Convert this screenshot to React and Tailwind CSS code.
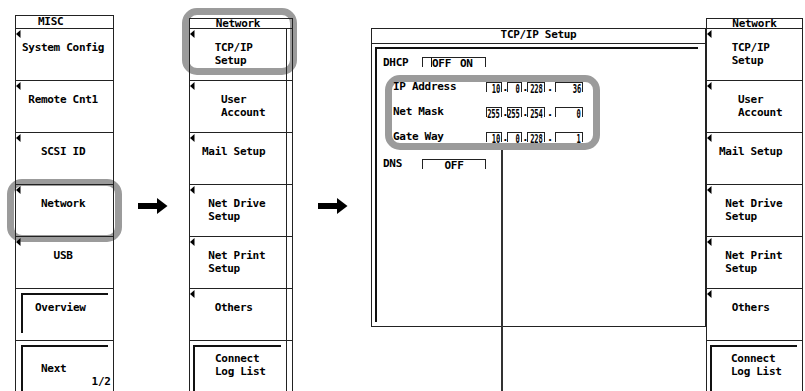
import React from 'react';

function Tri() {
  return (
    <svg width="5" height="8" viewBox="0 0 5 8" className="absolute left-0 top-[1px]">
      <path d="M0 4 L4.5 0 L4.5 8 Z" fill="#000" />
    </svg>
  );
}

function Arrow() {
  return (
    <svg width="30" height="16" viewBox="0 0 30 16">
      <path d="M0 5 H19 V0 L29.5 8 L19 16 V11 H0 Z" fill="#000" />
    </svg>
  );
}

// soft key of the right-hand menus (network menu)
function NetKey({ text, strip }) {
  return (
    <div className="flex h-[52px] border-b border-[#222]">
      <div className={strip ? 'relative w-[97px] border-r border-[#222]' : 'relative flex-1'}>
        <Tri />
        <div className="whitespace-pre pl-[12px] pt-[12px] leading-[13px]">{text}</div>
      </div>
    </div>
  );
}

function NetFrameKey({ strip, framePad }) {
  return (
    <div className="flex h-[52px] border-b border-[#222]">
      <div className={strip ? 'w-[97px] border-r border-[#222] pl-[3px] pr-[5px] pt-[4px]' : 'flex-1 pl-[3px] pr-[5px] pt-[4px]'}>
        <div className={'h-[47px] whitespace-pre border-l-2 border-t-2 border-[#111] pt-[5px] leading-[13px] ' + framePad}>
          {'Connect\nLog List'}
        </div>
      </div>
    </div>
  );
}

const netItems = ['  TCP/IP\n  Setup', '   User\n   Account', 'Mail Setup', ' Net Drive\n Setup', ' Net Print\n Setup', '  Others'];

function NetworkMenu({ strip }) {
  return (
    <div className={strip ? 'mt-[18px] w-[104px] shrink-0 border-x border-t border-[#222]' : 'mt-[18px] w-[97px] shrink-0 border-x border-t border-[#222]'}>
      <div className={strip ? 'h-[10px] border-b border-[#222] pr-[6px] text-center leading-[9px]' : 'h-[10px] border-b border-[#222] text-center leading-[9px]'}>
        Network
      </div>
      {netItems.map((t) => (
        <NetKey key={t} text={t} strip={strip} />
      ))}
      <NetFrameKey strip={strip} framePad={strip ? 'pl-[20px]' : 'pl-[19px]'} />
    </div>
  );
}

function MiscMenu() {
  const items = ['System Config', ' Remote Cnt1', '   SCSI ID', '   Network', '     USB'];
  return (
    <div className="ml-[15px] mt-[15px] w-[99px] shrink-0 border-x border-t border-[#222]">
      <div className="h-[13px] border-b border-[#222] pl-[22px] leading-[12px]">MISC</div>
      {items.map((t) => (
        <div key={t} className="relative h-[52px] border-b border-[#222]">
          <Tri />
          <div className="whitespace-pre pl-[6px] pt-[12px] leading-[13px]">{t}</div>
        </div>
      ))}
      <div className="h-[52px] border-b border-[#222] px-[5px] pt-[4px]">
        <div className="h-[40px] border-l-2 border-t-2 border-[#111] pl-[12px] pt-[6px] leading-[13px]">Overview</div>
      </div>
      <div className="h-[52px] px-[5px] pt-[4px]">
        <div className="h-[47px] whitespace-pre border-l-2 border-t-2 border-[#111] pl-[18px] pt-[15px] leading-[13px]">
          {'Next\n        1/2'}
        </div>
      </div>
    </div>
  );
}

function Octets({ values }) {
  const widths = ['w-[16px]', 'w-[15px]', 'w-[18px]', 'w-[28px]'];
  const dots = ['w-[5px]', 'w-[5px]', 'w-[10px]'];
  return (
    <div className="mt-[1px] flex">
      {values.map((v, i) => (
        <React.Fragment key={i}>
          <div className={'flex h-[10px] justify-end border-x border-t border-[#222] pr-[1px] ' + widths[i]}>
            <span className="inline-block origin-right scale-x-[0.55] text-[13px] leading-[11px]">{v}</span>
          </div>
          {i < 3 && <div className={'text-center leading-[11px] ' + dots[i]}>.</div>}
        </React.Fragment>
      ))}
    </div>
  );
}

function TcpIpPanel() {
  const rows = [
    ['IP Address', ['10', '0', '228', '36'], 'mt-[12px]'],
    ['Net Mask', ['255', '255', '254', '0'], 'mt-[13px]'],
    ['Gate Way', ['10', '0', '228', '1'], 'mt-[13px]'],
  ];
  return (
    <div className="mt-[28px] h-[299px] w-[335px] shrink-0 border border-[#222]">
      <div className="h-[15px] border-b border-[#222] text-center leading-[11px]">TCP/IP Setup</div>
      <div className="ml-[3px] mt-[3px] h-[275px] w-[323px] border-l-2 border-t-2 border-[#111]">
        {/* DHCP */}
        <div className="ml-[6px] mt-[8px] flex h-[12px]">
          <div className="w-[39px] leading-[12px]">DHCP</div>
          <div className="flex h-[10px] w-[64px] border-x border-t border-[#222] leading-[11px]">
            <span className="ml-[8px] border-l border-[#111]">OFF</span>
            <span className="ml-[9px]">ON</span>
          </div>
        </div>

        {rows.map(([label, vals, mt]) => (
          <div key={label} className={'ml-[16px] flex h-[12px] ' + mt}>
            <div className="w-[93px] leading-[12px]">{label}</div>
            <Octets values={vals} />
          </div>
        ))}

        {/* DNS */}
        <div className="ml-[6px] mt-[15px] flex h-[12px]">
          <div className="w-[39px] leading-[12px]">DNS</div>
          <div className="mt-[1px] h-[10px] w-[64px] border-x border-t border-[#222] text-center leading-[11px]">OFF</div>
        </div>
      </div>
    </div>
  );
}

export default function App() {
  return (
    <div className="relative isolate flex h-[391px] w-[805px] items-start overflow-hidden bg-white font-['DejaVu_Sans_Mono',monospace] text-[11px] font-bold tracking-[-0.3px] text-black">
      {/* grey highlight frames */}
      <div className="absolute left-[7px] top-[179px] -z-10 h-[63px] w-[115px] rounded-[15px] border-[7px] border-[#9b9b9b]" />
      <div className="absolute left-[182px] top-[8px] -z-10 h-[67px] w-[115px] rounded-[15px] border-[7px] border-[#9b9b9b]" />
      <div className="absolute left-[385px] top-[75px] -z-10 h-[75px] w-[215px] rounded-[15px] border-[7px] border-[#9b9b9b]" />

      <MiscMenu />
      <div className="w-[75px] shrink-0 pl-[24px] pt-[198px]">
        <Arrow />
      </div>
      <NetworkMenu strip />
      <div className="w-[78px] shrink-0 pl-[25px] pt-[198px]">
        <Arrow />
      </div>
      <TcpIpPanel />
      <NetworkMenu />

      {/* leader line from the address fields */}
      <div className="absolute left-[501px] top-[150px] h-[241px] w-[2px] bg-[#333]" />
    </div>
  );
}
